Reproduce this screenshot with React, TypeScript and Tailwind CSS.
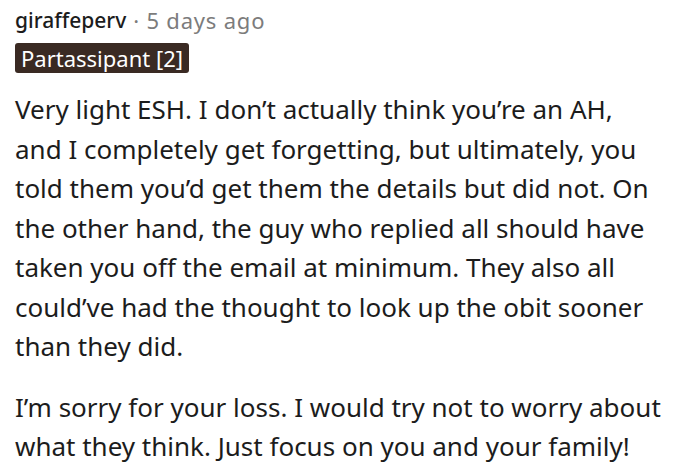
import React from "react";

export default function App() {
  return (
    <div className="w-[700px] h-[472px] bg-white overflow-hidden pl-[15px] pt-[4px]" style={{ fontFamily: '"Noto Sans", sans-serif' }}>
      <div className="flex items-center leading-[32px]">
        <span className="font-medium text-[21px] text-[#1c1c1c]">giraffeperv</span>
        <span className="text-[#7c7c7c] text-[22px] ml-[7px] tracking-[0.8px]">· 5 days ago</span>
      </div>
      <div className="mt-[7px] flex">
        <span className="bg-[#3a2a23] text-white text-[22px] leading-[30px] px-[6px] rounded-[3px]">Partassipant [2]</span>
      </div>
      <div className="mt-[17px] text-[26px] leading-[39.5px] text-[#1c1c1c] w-[650px]">
        <p>Very light ESH. I don’t actually think you’re an AH, and I completely get forgetting, but ultimately, you told them you’d get them the details but did not. On the other hand, the guy who replied all should have taken you off the email at minimum. They also all could’ve had the thought to look up the obit sooner than they did.</p>
        <p className="mt-[21px]">I’m sorry for your loss. I would try not to worry about what they think. Just focus on you and your family!</p>
      </div>
    </div>
  );
}
